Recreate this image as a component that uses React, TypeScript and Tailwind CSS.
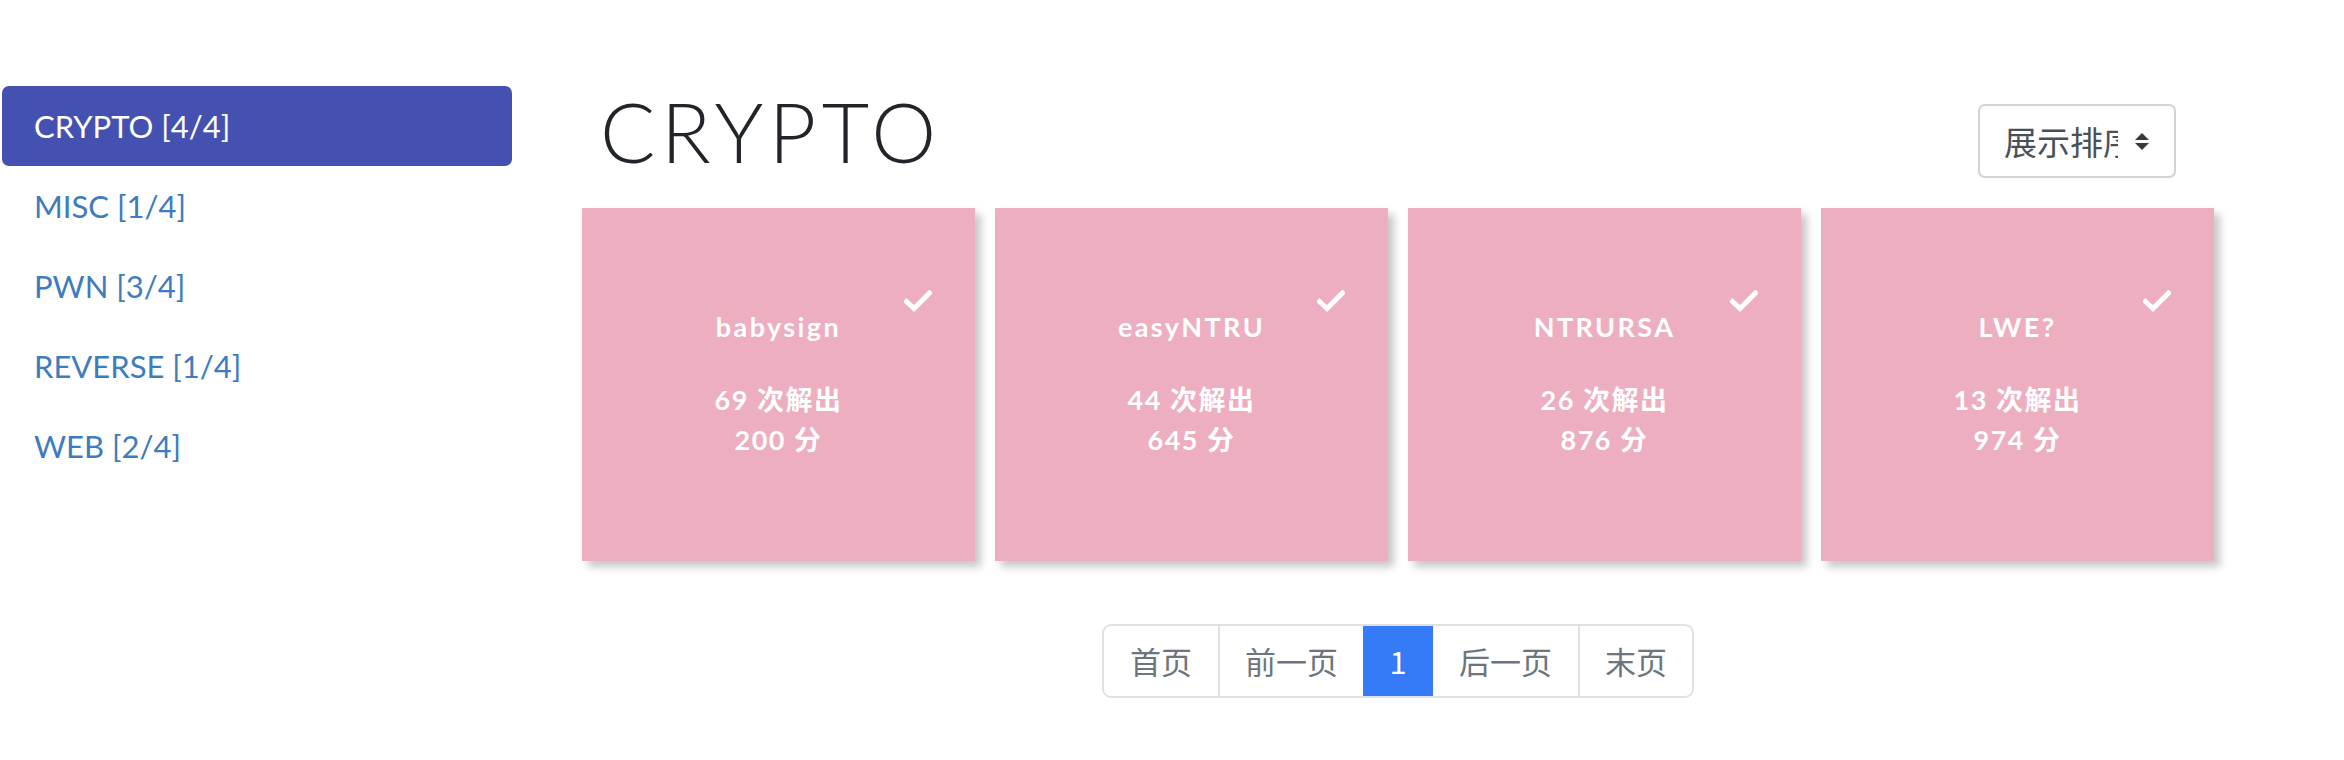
const categories = [
  { name: "CRYPTO", solved: 4, total: 4 },
  { name: "MISC", solved: 1, total: 4 },
  { name: "PWN", solved: 3, total: 4 },
  { name: "REVERSE", solved: 1, total: 4 },
  { name: "WEB", solved: 2, total: 4 },
];

const challenges = [
  { name: "babysign", solves: 69, score: 200 },
  { name: "easyNTRU", solves: 44, score: 645 },
  { name: "NTRURSA", solves: 26, score: 876 },
  { name: "LWE?", solves: 13, score: 974 },
];

const pages = [
  { label: "首页", w: "w-[114px]" },
  { label: "前一页", w: "w-[145px]" },
  { label: "1", w: "w-[70px]", active: true },
  { label: "后一页", w: "w-[145px]" },
  { label: "末页", w: "w-[114px]" },
];

function Check() {
  return (
    <svg viewBox="0 0 28 22" className="h-[22px] w-[28px]" fill="none">
      <path d="M2.5 11.5 L10 18.5 L25.5 3" stroke="white" strokeWidth="5" strokeLinecap="square" strokeLinejoin="miter" />
    </svg>
  );
}

function SortArrows() {
  return (
    <svg viewBox="0 0 16 19" className="h-[19px] w-[16px]">
      <path d="M1 8 L8 1 L15 8 Z" fill="#343a40" />
      <path d="M1 11 L8 18 L15 11 Z" fill="#343a40" />
    </svg>
  );
}

export default function App() {
  return (
    <div className="flex min-h-[760px] w-[2344px] bg-white pt-[86px] font-['Lato','Noto_Sans_CJK_SC',sans-serif]">
      <aside className="ml-[2px] w-[510px] shrink-0">
        {categories.map((c, i) => (
          <div
            key={c.name}
            className={
              i === 0
                ? "flex h-[80px] items-center rounded-[7px] bg-[#4451b1] pl-[32px] text-[31px] text-white"
                : "flex h-[80px] items-center pl-[32px] text-[31px] text-[#3e7bbf]"
            }
          >
            {c.name} [{c.solved}/{c.total}]
          </div>
        ))}
      </aside>

      <main className="ml-[70px] w-[1632px] shrink-0">
        <div className="flex h-[122px] items-start justify-between">
          <h1 className="mt-[4px] pl-[18px] text-[82px] font-light leading-none tracking-[5.5px] text-[#212529]">CRYPTO</h1>
          <div className="mr-[38px] mt-[18px] flex h-[74px] w-[198px] items-center rounded-[7px] border-2 border-[#ced4da] bg-white pl-[24px]">
            <div className="w-[114px] overflow-hidden whitespace-nowrap font-['Noto_Sans_CJK_SC',sans-serif] text-[33px] leading-none text-[#495057]">
              展示排序
            </div>
            <div className="ml-[16px]">
              <SortArrows />
            </div>
          </div>
        </div>

        <div className="grid grid-cols-4 gap-x-[20px]">
          {challenges.map((ch) => (
            <div
              key={ch.name}
              className="relative flex h-[353px] flex-col items-center justify-center bg-[#edaec0] pb-[3px] text-[27px] font-bold tracking-[1.5px] text-white shadow-[6px_6px_8px_rgba(0,0,0,0.22)]"
            >
              <div className="absolute right-[43px] top-[82px]">
                <Check />
              </div>
              <div className="leading-[40px] tracking-[2.4px]">{ch.name}</div>
              <div className="mt-[33px] text-center leading-[40px]">
                <div>{ch.solves} 次解出</div>
                <div>{ch.score} 分</div>
              </div>
            </div>
          ))}
        </div>

        <div className="mt-[63px] flex justify-center">
          <div className="flex h-[74px] overflow-hidden rounded-[9px] border-2 border-[#dee2e6] font-['Noto_Sans_CJK_SC',sans-serif] text-[31px]">
            {pages.map((p, i) => (
              <div
                key={p.label}
                className={
                  p.active
                    ? `flex ${p.w} items-center justify-center bg-[#357af6] text-white`
                    : `flex ${p.w} items-center justify-center text-[#6c757d] ${i > 0 && !pages[i - 1].active ? "border-l-2 border-[#dee2e6]" : ""}`
                }
              >
                {p.label}
              </div>
            ))}
          </div>
        </div>
      </main>
    </div>
  );
}
